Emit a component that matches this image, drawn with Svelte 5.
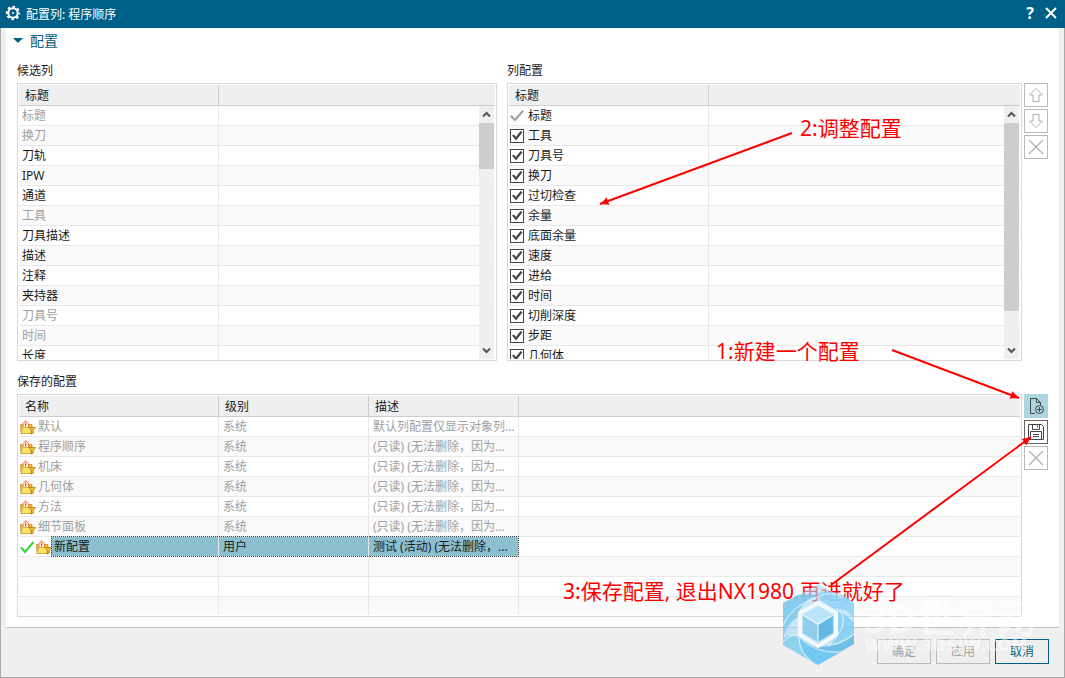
<script>
  const candidates = [
    { name: '标题', used: true },
    { name: '换刀', used: true },
    { name: '刀轨' },
    { name: 'IPW' },
    { name: '通道' },
    { name: '工具', used: true },
    { name: '刀具描述' },
    { name: '描述' },
    { name: '注释' },
    { name: '夹持器' },
    { name: '刀具号', used: true },
    { name: '时间', used: true },
    { name: '长度' }
  ];

  let columns = [
    { name: '标题', checked: true, locked: true },
    { name: '工具', checked: true },
    { name: '刀具号', checked: true },
    { name: '换刀', checked: true },
    { name: '过切检查', checked: true },
    { name: '余量', checked: true },
    { name: '底面余量', checked: true },
    { name: '速度', checked: true },
    { name: '进给', checked: true },
    { name: '时间', checked: true },
    { name: '切削深度', checked: true },
    { name: '步距', checked: true },
    { name: '几何体', checked: true }
  ];

  const readOnly = '(只读) (无法删除，因为...';
  const saved = [
    { name: '默认', level: '系统', note: '默认列配置仅显示对象列...' },
    { name: '程序顺序', level: '系统', note: readOnly },
    { name: '机床', level: '系统', note: readOnly },
    { name: '几何体', level: '系统', note: readOnly },
    { name: '方法', level: '系统', note: readOnly },
    { name: '细节面板', level: '系统', note: readOnly },
    { name: '新配置', level: '用户', note: '测试 (活动) (无法删除，...', active: true }
  ];
  const emptyRows = [1, 2, 3];
</script>

{#snippet folder()}
  <svg width="16" height="16" viewBox="0 0 16 16" aria-hidden="true">
    <path d="M.5 5.500h11.500v9H1z" fill="#eebd35" stroke="#c4902a" stroke-width=".8" />
    <path d="M3 9V4.500L5.500 1.500 8.500 4.500V9z" fill="#fff3e0" stroke="#ee7a4a" />
    <path d="M5.700 3.500v4" stroke="#e8502c" stroke-width="1.200" />
    <path d="M1.200 14.500 2.500 8.500h9L10.500 14.500z" fill="#fbe26a" stroke="#d3a02c" stroke-width=".6" />
    <path d="M8.500 8.500h7l-2.200 2.800V14l-1.900 1.300v-4z" fill="#f6bd2a" stroke="#b57f14" stroke-width=".8" />
  </svg>
{/snippet}

{#snippet cross()}
  <svg width="16" height="16" viewBox="0 0 16 16" aria-hidden="true">
    <path d="M1 1l14 14M15 1 1 15" fill="none" stroke="currentColor" stroke-width="1.300" />
  </svg>
{/snippet}

{#snippet scrollbar(size)}
  <div class="scrollbar" aria-hidden="true">
    <svg width="9" height="17" viewBox="0 0 9 17"><path d="M1 10.500 4.500 7 8 10.500" fill="none" stroke="#555" stroke-width="2" /></svg>
    <div class="track"><div class="thumb" style="height: {size}%"></div></div>
    <svg width="9" height="17" viewBox="0 0 9 17"><path d="M1 6.500 4.500 10 8 6.500" fill="none" stroke="#555" stroke-width="2" /></svg>
  </div>
{/snippet}

<div class="dialog">
  <header>
    <svg width="16" height="16" viewBox="0 0 16 16" aria-hidden="true">
      <circle cx="8" cy="8" r="4.700" fill="none" stroke="#fff" stroke-width="2" />
      <circle cx="8" cy="8" r="6.200" fill="none" stroke="#fff" stroke-width="2" stroke-dasharray="2.600 2.270" stroke-dashoffset="1.300" />
      <circle cx="8" cy="8" r="1" fill="#fff" />
    </svg>
    <h1>配置列: 程序顺序</h1>
    <button class="bar" aria-label="帮助">?</button>
    <button class="bar" aria-label="关闭">
      <svg width="12" height="12" viewBox="0 0 12 12"><path d="M1 1l10 10M11 1 1 11" stroke="#fff" stroke-width="2" /></svg>
    </button>
  </header>

  <div class="content">
    <main>
      <button class="section">
        <svg width="10" height="5" viewBox="0 0 10 5" aria-hidden="true"><path d="M0 0h10L5 5z" fill="#005f87" /></svg>
        配置
      </button>

      <div class="lists">
        <section class="candidates">
          <h2>候选列</h2>
          <div class="box tall">
            <table>
              <colgroup><col class="wide" /><col /></colgroup>
              <thead><tr><th>标题</th><th></th></tr></thead>
              <tbody>
                {#each candidates as item}
                  <tr class:muted={item.used}><td>{item.name}</td><td></td></tr>
                {/each}
              </tbody>
            </table>
            {@render scrollbar(21)}
          </div>
        </section>

        <section class="columns">
          <h2>列配置</h2>
          <div class="box tall">
            <table>
              <colgroup><col class="wide" /><col /></colgroup>
              <thead><tr><th>标题</th><th></th></tr></thead>
              <tbody>
                {#each columns as column}
                  <tr>
                    <td class="with-icon">
                      <label>
                        <input type="checkbox" bind:checked={column.checked} disabled={column.locked} />
                        {column.name}
                      </label>
                    </td>
                    <td></td>
                  </tr>
                {/each}
              </tbody>
            </table>
            {@render scrollbar(86)}
          </div>
        </section>

        <div class="tools">
          <button disabled aria-label="上移">
            <svg width="16" height="16" viewBox="0 0 16 16"><path d="M8 1.500 14.500 8H11v6.500H5V8H1.500z" fill="none" stroke="currentColor" /></svg>
          </button>
          <button disabled aria-label="下移">
            <svg width="16" height="16" viewBox="0 0 16 16"><path d="M8 14.500 1.500 8H5V1.500h6V8h3.500z" fill="none" stroke="currentColor" /></svg>
          </button>
          <button disabled aria-label="移除">{@render cross()}</button>
        </div>
      </div>

      <div class="lists saved">
        <section>
          <h2>保存的配置</h2>
          <div class="box short">
            <table>
              <colgroup><col class="wide" /><col class="mid" /><col class="mid" /><col /></colgroup>
              <thead><tr><th>名称</th><th>级别</th><th>描述</th><th></th></tr></thead>
              <tbody>
                {#each saved as config}
                  <tr class:muted={!config.active} class:active={config.active}>
                    <td class="with-icon">
                      <div class="name">
                        {#if config.active}
                          <svg width="16" height="16" viewBox="0 0 16 16" aria-hidden="true"><path d="M1 8.500 5 13l8.500-10" fill="none" stroke="#2fd63a" stroke-width="2" /></svg>
                        {/if}
                        {@render folder()}
                        <span>{config.name}</span>
                      </div>
                    </td>
                    <td>{config.level}</td>
                    <td>{config.note}</td>
                    <td></td>
                  </tr>
                {/each}
                {#each emptyRows as row (row)}
                  <tr><td></td><td></td><td></td><td></td></tr>
                {/each}
              </tbody>
            </table>
          </div>
        </section>

        <div class="tools">
          <button class="hot" aria-label="新建">
            <svg width="18" height="18" viewBox="0 0 18 18" fill="none" stroke="#444">
              <path d="M8 16.500H3.500v-15h6l4 4V8M9.500 1.500v4h4" />
              <circle cx="12.500" cy="12.500" r="4" />
              <path d="M12.500 10v5M10 12.500h5" />
            </svg>
          </button>
          <button class="on" aria-label="保存">
            <svg width="18" height="18" viewBox="0 0 18 18" fill="none" stroke="#444">
              <path d="M1.500 1.500h13l2 2v13h-15z" />
              <path d="M5.500 1.500v5h7v-5M10.500 2.500v2M3.500 16.500v-8h11v8M6 11.500h6M6 13.500h6" />
            </svg>
          </button>
          <button disabled aria-label="删除">{@render cross()}</button>
        </div>
      </div>
    </main>

    <footer>
      <button disabled>确定</button>
      <button disabled>应用</button>
      <button class="primary">取消</button>
    </footer>
  </div>

  <!-- step notes drawn over the dialog -->
  <svg class="notes" width="1065" height="678" viewBox="0 0 1065 678">
    <defs>
      <marker id="tip" markerUnits="userSpaceOnUse" markerWidth="10" markerHeight="8" refX="9" refY="4" orient="auto">
        <path d="M0 0 9 4 0 8 1 4z" fill="#f00" />
      </marker>
    </defs>
    <g stroke="#f00" stroke-width="2">
      <path d="M792 133 600 204" marker-end="url(#tip)" />
      <path d="M892 350 1019 398" marker-end="url(#tip)" />
      <path d="M831 585 1031 437" marker-end="url(#tip)" />
    </g>
    <g class="steps">
      <text x="800" y="136">2:调整配置</text>
      <text x="716" y="359">1:新建一个配置</text>
      <text x="563" y="599">3:保存配置, 退出NX1980,再进就好了</text>
    </g>
    <g class="watermark">
      <path d="M818 584 854 603V644L818 665 783 645V603z" fill="#a5daf6" fill-opacity=".6" />
      <g opacity=".8">
        <path d="M783 603 798 595Q812 594 820 595 800 600 797 618 785 625 783 640z" fill="#7cc8ee" />
        <path d="M818 593Q838 588 854 603V620Q846 606 836 610L820 600z" fill="#8ad4fa" />
        <path d="M836 610Q843 613 854 622V634Q844 640 830 645 841 630 836 610z" fill="#83cdf2" />
        <path d="M798 633Q807 650 829 646 844 642 854 635V644L840 652Q817 655 800 641z" fill="#5cb7e4" />
        <path d="M783 645V638Q790 634 798 637 802 652 819 664L818 665z" fill="#85ceee" />
        <path d="M799 637Q813 655 841 652L818 665Q802 656 799 637z" fill="#5ec4f4" />
        <path d="M783 625Q792 606 815 598 832 589 843 598M836 608Q854 620 828 647M854 634Q842 645 828 645M841 652Q815 654 799 637 799 652 811 661M783 642Q790 634 798 635" fill="none" stroke="#e9f7fd" />
        <path d="M818 603 836 613V635L818 646 800 635V613z" fill="none" stroke="#fff" stroke-width="4" />
        <path d="M818 606 833 615 818 624 803 615z" fill="#b7e4fa" />
        <path d="M803 616 818 625V642L803 633z" fill="#84c8ea" />
        <path d="M833 616 818 625V642L833 633z" fill="#4daee0" />
        <path d="M803 615l15 9 15-9M818 624v18" fill="none" stroke="#fff" />
      </g>
      <text class="brand" x="864" y="633">3D世界网</text>
      <text class="site" x="864" y="651">WWW.3DSJW.COM</text>
    </g>
  </svg>
</div>

<style>
  :global(body) {
    margin: 0;
    background: #efefef;
  }
  .dialog {
    position: relative;
    display: flex;
    flex-direction: column;
    min-height: 100vh;
    color: #1a1a1a;
    font: 12px/19px 'Noto Sans', 'Noto Sans CJK SC', sans-serif;
  }
  button {
    margin: 0;
    padding: 0;
    font: inherit;
    color: inherit;
    background: none;
    border: none;
    border-radius: 0;
  }
  h1,
  h2 {
    margin: 0;
    font-size: 12px;
    font-weight: normal;
  }
  header {
    display: flex;
    align-items: center;
    gap: 5px;
    height: 28px;
    padding: 0 6px 2px 5px;
    box-sizing: border-box;
    color: #fff;
    background: #005f87;
  }
  h1 {
    flex: 1;
    padding-top: 3px;
  }
  .bar {
    display: flex;
    align-items: center;
    justify-content: center;
    width: 16px;
    height: 20px;
    font-size: 16px;
    font-weight: bold;
  }
  .content {
    flex: 1;
    display: flex;
    flex-direction: column;
    background: #efefef;
    border: 1px solid #a9a9a9;
    border-top: none;
  }
  main {
    margin: 0 5px;
    padding: 0 11px 10px;
    background: #fff;
    border-bottom: 1px solid #c3c3c3;
  }
  .section {
    display: flex;
    align-items: center;
    gap: 7px;
    height: 26px;
    padding-bottom: 2px;
    margin-left: -4px;
    color: #005f87;
    font-size: 14px;
  }
  .lists {
    display: flex;
    align-items: flex-end;
    margin-top: 4px;
  }
  .saved {
    margin-top: 8px;
  }
  section {
    flex: 1;
    min-width: 0;
  }
  .candidates {
    flex: 480 1 0;
    margin-right: 10px;
  }
  .columns {
    flex: 515 1 0;
  }
  h2 {
    line-height: 25px;
  }
  .box {
    position: relative;
    padding: 1px;
    overflow: hidden;
    background: #fff;
    border: 1px solid #d9d9d9;
  }
  .tall {
    height: 274px;
  }
  .short {
    height: 219px;
  }
  .box::after {
    content: '';
    position: absolute;
    inset: 0;
    border: 1px solid #fff;
    pointer-events: none;
  }
  table {
    width: 100%;
    table-layout: fixed;
    border-spacing: 0;
  }
  .wide {
    width: 200px;
  }
  .mid {
    width: 150px;
  }
  th {
    height: 20px;
    padding: 0 0 0 6px;
    font-weight: normal;
    text-align: left;
    background: #efefef;
    border-right: 1px solid #cdcdcd;
    border-bottom: 1px solid #cdcdcd;
  }
  td {
    position: relative;
    height: 19px;
    padding: 0 0 0 4px;
    white-space: nowrap;
    border-right: 1px solid #e8e8e8;
    border-bottom: 1px solid #e8e8e8;
  }
  td:first-child {
    padding-left: 3px;
  }
  td.with-icon {
    padding-left: 1px;
  }
  th:last-child,
  td:last-child {
    border-right: none;
  }
  tr:nth-child(even) td {
    background: #fafafa;
  }
  .muted {
    color: #a0a0a0;
  }
  label,
  .name {
    display: flex;
    align-items: center;
    height: 19px;
  }
  label {
    gap: 4px;
  }
  .name span {
    flex: 1;
    padding-left: 2px;
  }
  input {
    appearance: none;
    width: 14px;
    height: 14px;
    margin: 0;
    border: 1px solid #444;
    background: #fff;
  }
  input:disabled {
    border-color: transparent;
  }
  input:checked::before {
    content: '';
    display: block;
    height: 12px;
    background: #444;
    clip-path: polygon(8% 50%, 25% 42%, 40% 62%, 80% 12%, 96% 22%, 42% 92%);
  }
  input:disabled:checked::before {
    margin: 0 -1px;
    background: #a0a0a0;
    clip-path: polygon(0 60%, 12% 46%, 35% 74%, 88% 4%, 100% 14%, 36% 100%);
  }
  .scrollbar {
    position: absolute;
    top: 22px;
    right: 2px;
    bottom: 1px;
    width: 15px;
    display: flex;
    flex-direction: column;
    align-items: center;
    background: #efefef;
  }
  .track {
    flex: 1;
    width: 15px;
  }
  .thumb {
    background: #cdcdcd;
  }
  .active td:not(:last-child) {
    background: #8cc0d0;
  }
  .active td.with-icon {
    background: #fff;
  }
  .active span {
    position: relative;
    margin-left: -1px;
    padding-left: 3px;
    background: #8cc0d0;
  }
  .active span::after,
  .active td:not(.with-icon, :last-child)::after {
    content: '';
    position: absolute;
    inset: -1px 0;
    border: 0 dotted #444;
    border-width: 1px 0;
  }
  .active span::after {
    border-left-width: 1px;
  }
  .active td:nth-child(3)::after {
    right: -1px;
    border-right-width: 1px;
  }
  .tools {
    align-self: flex-start;
    display: flex;
    flex-direction: column;
    gap: 2px;
    margin: 25px 0 0 2px;
  }
  .tools button {
    display: flex;
    align-items: center;
    justify-content: center;
    width: 24px;
    height: 24px;
    color: #b0b0b0;
    border: 1px solid #b9b9b9;
  }
  .tools .hot {
    background: #aed6e0;
    border-color: #aed6e0;
  }
  .tools .on {
    border-color: #666;
  }
  .tools svg {
    flex: none;
  }
  footer {
    display: flex;
    justify-content: flex-end;
    gap: 5px;
    padding: 11px 15px 13px;
  }
  footer button {
    width: 54px;
    height: 25px;
    color: #a0a0a0;
    border: 1px solid #b9b9b9;
  }
  footer .primary {
    color: #005f87;
    border-color: #005f87;
  }
  .notes {
    position: absolute;
    top: 0;
    left: 0;
    pointer-events: none;
  }
  .steps {
    fill: #f00;
    font-size: 21px;
  }
  .watermark text {
    fill: #fff;
    fill-opacity: 0.5;
    font-weight: bold;
  }
  .brand {
    font-size: 40px;
  }
  .site {
    font-family: 'DejaVu Sans', sans-serif;
    font-size: 16px;
  }
</style>
